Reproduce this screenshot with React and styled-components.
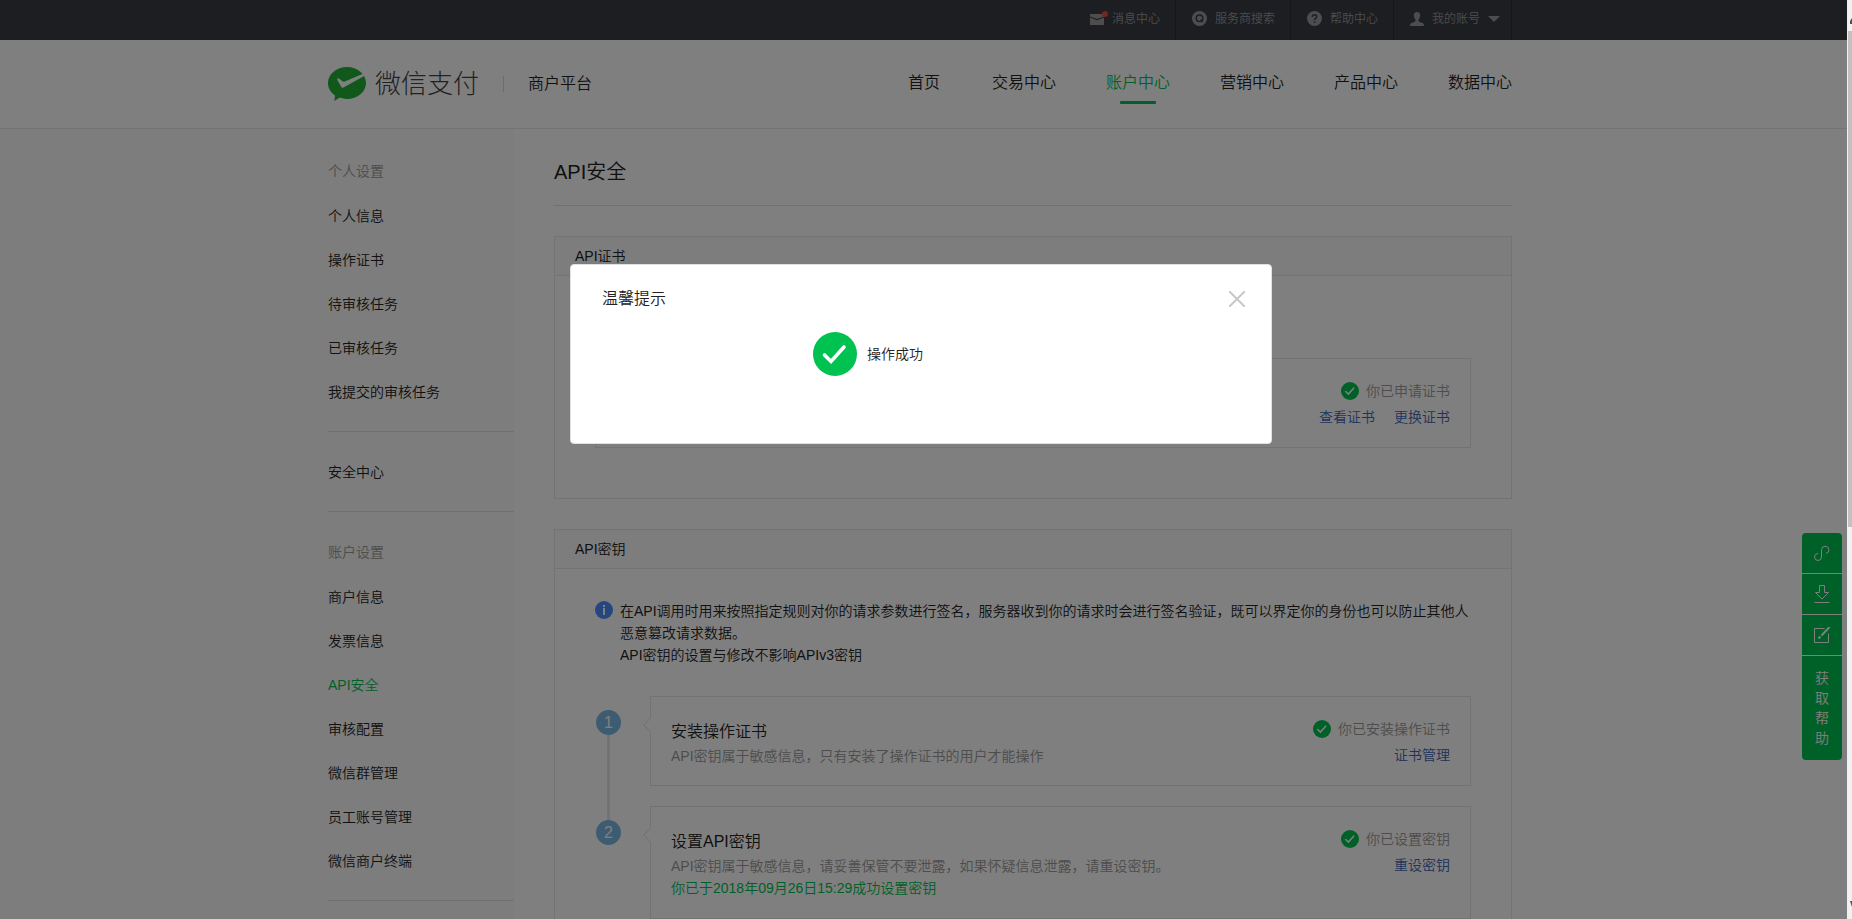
import React, { useState } from "react";
import styled, { createGlobalStyle, css } from "styled-components";

const GlobalStyle = createGlobalStyle`
  * {
    box-sizing: border-box;
  }
  body {
    margin: 0;
    color: #222;
    background: #fff;
    font-family: "Liberation Sans", "Noto Sans CJK SC", sans-serif;
    font-size: 14px;
    font-weight: 350;
    line-height: 22px;
    overflow: hidden;
  }
  ul, ol, h1, h2, h3, p {
    margin: 0;
    padding: 0;
    list-style: none;
    font-weight: inherit;
  }
  a {
    color: inherit;
    text-decoration: none;
  }
  button {
    padding: 0;
    border: 0;
    background: none;
    color: inherit;
    font: inherit;
    cursor: pointer;
  }
`;

const green = "#00c250";
const line = "#e7e7eb";

const navItems = ["首页", "交易中心", "账户中心", "营销中心", "产品中心", "数据中心"];

const menuGroups = [
  {
    title: "个人设置",
    items: ["个人信息", "操作证书", "待审核任务", "已审核任务", "我提交的审核任务"],
  },
  { items: ["安全中心"] },
  {
    title: "账户设置",
    items: [
      "商户信息",
      "发票信息",
      "API安全",
      "审核配置",
      "微信群管理",
      "员工账号管理",
      "微信商户终端",
    ],
  },
];

const steps = [
  {
    title: "安装操作证书",
    desc: "API密钥属于敏感信息，只有安装了操作证书的用户才能操作",
    status: "你已安装操作证书",
    action: "证书管理",
  },
  {
    title: "设置API密钥",
    desc: "API密钥属于敏感信息，请妥善保管不要泄露，如果怀疑信息泄露，请重设密钥。",
    note: "你已于2018年09月26日15:29成功设置密钥",
    status: "你已设置密钥",
    action: "重设密钥",
  },
];

/* icons */

function MailIcon() {
  return (
    <svg width="18" height="16" viewBox="0 0 18 16">
      <path d="M0 3h14v2.4L7 8 0 5.400z" fill="#9a9a9a" />
      <path d="M0 6.600 7 9.200l7-2.600V14H0z" fill="#9a9a9a" />
      <circle cx="15" cy="3" r="3" fill="#f0483f" />
    </svg>
  );
}

function SearchIcon() {
  return (
    <svg width="15" height="15" viewBox="0 0 15 15" fill="none">
      <circle cx="7.500" cy="7.500" r="7.500" fill="#9a9a9a" />
      <circle cx="7.500" cy="7.300" r="3.300" stroke="#3a3c44" strokeWidth="1.500" />
      <path d="m8.500 8.500 2.500 2.500" stroke="#3a3c44" strokeWidth="1.500" />
    </svg>
  );
}

function HelpIcon() {
  return (
    <svg width="15" height="15" viewBox="0 0 15 15" fill="none">
      <circle cx="7.500" cy="7.500" r="7.500" fill="#9a9a9a" />
      <path
        d="M5.300 5.900c0-1.400 1-2.200 2.200-2.200s2.200.8 2.200 2c0 1.600-2.100 1.600-2.100 3.300"
        stroke="#3a3c44"
        strokeWidth="1.500"
      />
      <path d="M6.800 10.200h1.600v1.500H6.800z" fill="#3a3c44" />
    </svg>
  );
}

function UserIcon() {
  return (
    <svg width="14" height="14" viewBox="0 0 14 14" fill="#9a9a9a">
      <path d="M7 0c2 0 3.200 1.400 3.200 3.400 0 1.700-.7 3.200-1.700 4v1.500c.4.800 2 1.200 3.600 1.800 1.300.5 1.900 1.300 1.900 3.300H0c0-2 .6-2.800 1.900-3.300 1.600-.6 3.200-1 3.600-1.800V7.400c-1-.8-1.700-2.300-1.700-4C3.800 1.400 5 0 7 0z" />
    </svg>
  );
}

function CaretIcon() {
  return (
    <svg width="12" height="6" viewBox="0 0 12 6" fill="#9a9a9a">
      <path d="M0 0h12L6 6z" />
    </svg>
  );
}

function PayLogo() {
  return (
    <svg width="38" height="34" viewBox="0 0 38 34">
      <path
        d="M19 0C8.500 0 0 7.200 0 16c0 5.200 2.700 9.500 7 12.400L6.300 34l5.500-3.400c2.200.9 4.600 1.400 7.200 1.400 10.500 0 19-7.200 19-16S29.500 0 19 0z"
        fill="#22b037"
      />
      <path
        d="M9.400 11.800c.5-.7 1.300-.5 1.900 0l3.600 2.700c.6.400 1.200.5 2 .1L35.500 6.500l1.500 2.100-21.500 11.800c-1 .6-1.800.4-2.300-.6L9.500 13.200c-.3-.5-.4-1-.1-1.400z"
        fill="#fff"
      />
    </svg>
  );
}

function CheckIcon({ size }) {
  return (
    <svg width={size} height={size} viewBox="0 0 44 44" fill="none">
      <circle cx="22" cy="22" r="22" fill={green} />
      <path
        d="m11.500 23 6.500 6.500L31 15"
        stroke="#fff"
        strokeWidth="3.600"
        strokeLinecap="round"
      />
    </svg>
  );
}

function InfoIcon() {
  return (
    <svg width="18" height="18" viewBox="0 0 18 18">
      <circle cx="9" cy="9" r="9" fill="#4a8cfe" />
      <path d="M8 4h2v2H8zM8 7h2v7H8z" fill="#fff" />
    </svg>
  );
}

function CloseIcon() {
  return (
    <svg width="16" height="16" viewBox="0 0 16 16" stroke="#c8c8c8" strokeWidth="2">
      <path d="m0 0 16 16M16 0 0 16" />
    </svg>
  );
}

function LinkIcon() {
  return (
    <svg width="16" height="16" viewBox="0 0 16 16" fill="none" stroke="#fff">
      <path d="M4 8.500A3.500 3.500 0 1 0 7.500 12V4.500A3.700 3.700 0 1 1 12 8.500" />
    </svg>
  );
}

function DownloadIcon() {
  return (
    <svg width="16" height="18" viewBox="0 0 16 18" fill="none" stroke="#fff">
      <path d="M5.500 7.500v-7h5v7h4L8 14 1.500 7.500zM.5 17.500h15" />
    </svg>
  );
}

function EditIcon() {
  return (
    <svg width="16" height="16" viewBox="0 0 16 16" fill="none" stroke="#fff">
      <path d="M10.500 1.500H.5v14h14v-9" />
      <path d="m15.500 0-8 8.500" strokeWidth="2" />
      <path d="m6.500 9.500-2 2" strokeWidth="2" />
    </svg>
  );
}

function ScrollArrow({ down }) {
  return (
    <svg width="4" height="31" viewBox="0 0 4 31" fill="#505050">
      <path d={down ? "M2 13h2v6z" : "M2 24v-3l2-3v6z"} />
    </svg>
  );
}

/* shell */

const Window = styled.div`
  display: flex;
  height: 100vh;
`;

const Page = styled.div`
  flex: 1;
  min-width: 0;
  overflow: hidden;
`;

const ScrollTrack = styled.div`
  display: flex;
  flex-direction: column;
  width: 5px;
  padding-left: 1px;
  background: #f1f1f1;
`;

const ScrollThumb = styled.div`
  height: 54%;
  margin-bottom: auto;
  background: #c1c1c1;
`;

const Container = styled.div`
  width: 1184px;
  max-width: 100%;
  margin: 0 auto;
`;

const TopBar = styled.div`
  height: 40px;
  padding-right: 7px;
  background: #3a3c44;
`;

const TopLinks = styled.ul`
  display: flex;
  justify-content: flex-end;
`;

const TopLink = styled.a`
  display: flex;
  align-items: center;
  gap: 8px;
  height: 40px;
  padding: 0 15px 3px 16px;
  border-right: 1px solid #2a2c31;
  color: #9a9a9a;
  font-size: 12px;

  ${({ $tight }) => $tight && css`
    gap: 4px;
  `}
  ${({ $menu }) => $menu && css`
    padding-right: 11px;
  `}
`;

const Header = styled.header`
  padding-right: 7px;
  border-bottom: 1px solid ${line};
`;

const HeaderInner = styled(Container)`
  display: flex;
  align-items: center;
  height: 88px;
`;

const Brand = styled.a`
  display: flex;
  align-items: center;
  gap: 9px;
  color: #444;
  font-size: 26px;
  font-weight: 300;
`;

const Platform = styled.span`
  margin-left: 24px;
  padding-left: 24px;
  border-left: 1px solid #d9d9d9;
  font-size: 16px;
  line-height: 16px;
`;

const Nav = styled.nav`
  display: flex;
  gap: 50px;
  margin-left: auto;
`;

const NavLink = styled.a`
  display: flex;
  flex-direction: column;
  align-items: center;
  padding-top: 7px;
  font-size: 16px;
  line-height: 24px;
  color: ${({ $active }) => ($active ? green : "#222")};

  &::after {
    content: "";
    width: 36px;
    height: 3px;
    margin-top: 6px;
    border-radius: 1px;
    background: ${({ $active }) => ($active ? green : "transparent")};
  }
`;

/* side menu and content */

const Body = styled.div`
  display: flex;
  padding-right: 7px;

  &::before,
  &::after {
    content: "";
    flex: 1;
  }
  &::before {
    background: #fafafa;
  }
`;

const Columns = styled.div`
  display: flex;
  width: 1184px;
`;

const Aside = styled.aside`
  width: 186px;
  padding-top: 2px;
  background: #fafafa;
`;

const MenuGroup = styled.div`
  padding: 18px 0 17px;
  border-bottom: 1px solid #e0e0e0;
  line-height: 44px;
`;

const MenuTitle = styled.h2`
  height: 44px;
  margin-bottom: 1px;
  color: #9a9a9a;
  font-size: 14px;
`;

const MenuLink = styled.a`
  display: block;
  color: ${({ $active }) => ($active ? green : "#222")};
`;

const Main = styled.main`
  flex: 1;
  padding-left: 40px;
`;

const PageTitle = styled.h1`
  padding-top: 10px;
  border-bottom: 1px solid #e0e0e0;
  font-size: 20px;
  line-height: 66px;
`;

const Panel = styled.section`
  margin-top: 30px;
  border: 1px solid ${line};
`;

const PanelTitle = styled.h2`
  padding-left: 20px;
  border-bottom: 1px solid ${line};
  background: #fafafa;
  font-size: 14px;
  line-height: 38px;
`;

const PanelBody = styled.div`
  padding: ${({ $top }) => $top}px 40px 50px;
`;

const Notice = styled.div`
  display: flex;
  gap: 7px;
  margin-bottom: 30px;

  svg {
    flex: none;
    margin-top: 1px;
  }
`;

const Card = styled.div`
  flex: 1;
  display: flex;
  justify-content: space-between;
  min-height: 90px;
  padding: 19px 20px 17px;
  border: 1px solid ${line};
  position: relative;
`;

const Pointer = styled.span`
  position: absolute;
  top: 23px;
  left: -6px;
  width: 10px;
  height: 10px;
  border: 1px solid ${line};
  border-width: 0 0 1px 1px;
  background: #fff;
  transform: rotate(45deg);
`;

const CardText = styled.div`
  padding-top: 3px;
`;

const CardTitle = styled.h3`
  font-size: 16px;
  line-height: 26px;
`;

const Muted = styled.p`
  color: #9a9a9a;
`;

const Done = styled.p`
  margin-bottom: 2px;
  color: ${green};
`;

const Side = styled.div`
  margin-left: auto;
  line-height: 26px;
`;

const Status = styled.div`
  display: flex;
  align-items: center;
  justify-content: flex-end;
  gap: 7px;
  color: #9a9a9a;
`;

const Actions = styled.div`
  display: flex;
  justify-content: flex-end;
  gap: 19px;
  color: #4265b5;
`;

const Step = styled.li`
  display: flex;
`;

const Rail = styled.div`
  display: flex;
  flex-direction: column;
  align-items: center;
  width: 27px;
  margin-right: 28px;
`;

const RailLine = styled.span`
  flex: ${({ $lead }) => ($lead ? "none" : 1)};
  width: 3px;
  height: 14px;
  background: ${({ $hidden }) => ($hidden ? "transparent" : line)};
`;

const StepNumber = styled.span`
  width: 25px;
  height: 25px;
  border-radius: 50%;
  background: #7ab8e4;
  color: #fff;
  font-size: 16px;
  line-height: 25px;
  text-align: center;
`;

const StepContent = styled.div`
  flex: 1;
  padding-bottom: 20px;
`;

/* floating help bar */

const HelpBar = styled.div`
  position: fixed;
  top: 533px;
  right: 10px;
  width: 40px;
  border-radius: 4px;
  overflow: hidden;
  display: flex;
  flex-direction: column;
  gap: 1px;
`;

const HelpButton = styled.button`
  display: flex;
  align-items: center;
  justify-content: center;
  height: 40px;
  background: ${green};
  color: #fff;
`;

const HelpText = styled(HelpButton)`
  height: 104px;
  padding: 0 12px;
  line-height: 20px;
`;

/* dialog */

const Mask = styled.div`
  position: fixed;
  inset: 0 5px 0 0;
  padding: 264px 5px 0 0;
  background: rgba(0, 0, 0, 0.5);
`;

const Dialog = styled.div`
  width: 702px;
  max-width: 100%;
  min-height: 180px;
  margin: 0 auto;
  border: 1px solid #e0e0e0;
  border-radius: 4px;
  background: #fff;
`;

const DialogHead = styled.div`
  display: flex;
  align-items: center;
  justify-content: space-between;
  height: 67px;
  padding: 0 26px 0 31px;
`;

const DialogTitle = styled.h2`
  font-size: 16px;
`;

const CloseButton = styled.button`
  display: flex;
`;

const Result = styled.div`
  display: flex;
  align-items: center;
  gap: 10px;
  padding-left: 242px;
`;

function TopNav() {
  return (
    <TopBar>
      <Container>
        <TopLinks>
          <li>
            <TopLink href="#message" $tight>
              <MailIcon />
              消息中心
            </TopLink>
          </li>
          <li>
            <TopLink href="#search">
              <SearchIcon />
              服务商搜索
            </TopLink>
          </li>
          <li>
            <TopLink href="#help">
              <HelpIcon />
              帮助中心
            </TopLink>
          </li>
          <li>
            <TopLink href="#account" $menu>
              <UserIcon />
              我的账号
              <CaretIcon />
            </TopLink>
          </li>
        </TopLinks>
      </Container>
    </TopBar>
  );
}

function SideMenu() {
  return (
    <Aside>
      {menuGroups.map((group) => (
        <MenuGroup key={group.items[0]}>
          {group.title && <MenuTitle>{group.title}</MenuTitle>}
          <ul>
            {group.items.map((item) => (
              <li key={item}>
                <MenuLink href="#menu" $active={item === "API安全"}>
                  {item}
                </MenuLink>
              </li>
            ))}
          </ul>
        </MenuGroup>
      ))}
    </Aside>
  );
}

function CardSide({ status, actions }) {
  return (
    <Side>
      <Status>
        <CheckIcon size={18} />
        {status}
      </Status>
      <Actions>
        {actions.map((action) => (
          <a href="#action" key={action}>{action}</a>
        ))}
      </Actions>
    </Side>
  );
}

export default function App() {
  const [open, setOpen] = useState(true);

  return (
    <Window>
      <GlobalStyle />
      <Page>
        <TopNav />
        <Header>
          <HeaderInner>
            <Brand href="#home">
              <PayLogo />
              微信支付
            </Brand>
            <Platform>商户平台</Platform>
            <Nav>
              {navItems.map((item) => (
                <NavLink href="#nav" key={item} $active={item === "账户中心"}>
                  {item}
                </NavLink>
              ))}
            </Nav>
          </HeaderInner>
        </Header>
        <Body>
          <Columns>
            <SideMenu />
            <Main>
              <PageTitle>API安全</PageTitle>
              <Panel>
                <PanelTitle>API证书</PanelTitle>
                <PanelBody $top={82}>
                  <Card>
                    <CardSide status="你已申请证书" actions={["查看证书", "更换证书"]} />
                  </Card>
                </PanelBody>
              </Panel>
              <Panel>
                <PanelTitle>API密钥</PanelTitle>
                <PanelBody $top={31}>
                  <Notice>
                    <InfoIcon />
                    <div>
                      <p>
                        在API调用时用来按照指定规则对你的请求参数进行签名，服务器收到你的请求时会进行签名验证，既可以界定你的身份也可以防止其他人恶意篡改请求数据。
                      </p>
                      <p>API密钥的设置与修改不影响APIv3密钥</p>
                    </div>
                  </Notice>
                  <ol>
                    {steps.map((step, i) => (
                      <Step key={step.title}>
                        <Rail>
                          <RailLine $lead $hidden={i === 0} />
                          <StepNumber>{i + 1}</StepNumber>
                          <RailLine $hidden={i === steps.length - 1} />
                        </Rail>
                        <StepContent>
                          <Card>
                            <Pointer />
                            <CardText>
                              <CardTitle>{step.title}</CardTitle>
                              <Muted>{step.desc}</Muted>
                              {step.note && <Done>{step.note}</Done>}
                            </CardText>
                            <CardSide status={step.status} actions={[step.action]} />
                          </Card>
                        </StepContent>
                      </Step>
                    ))}
                  </ol>
                </PanelBody>
              </Panel>
            </Main>
          </Columns>
        </Body>
      </Page>
      <ScrollTrack>
        <ScrollArrow />
        <ScrollThumb />
        <ScrollArrow down />
      </ScrollTrack>
      <HelpBar>
        <HelpButton aria-label="链接"><LinkIcon /></HelpButton>
        <HelpButton aria-label="下载"><DownloadIcon /></HelpButton>
        <HelpButton aria-label="反馈"><EditIcon /></HelpButton>
        <HelpText>获取帮助</HelpText>
      </HelpBar>
      {open && (
        <Mask>
          <Dialog role="dialog" aria-labelledby="dialog-title">
            <DialogHead>
              <DialogTitle id="dialog-title">温馨提示</DialogTitle>
              <CloseButton aria-label="关闭" onClick={() => setOpen(false)}>
                <CloseIcon />
              </CloseButton>
            </DialogHead>
            <Result>
              <CheckIcon size={44} />
              操作成功
            </Result>
          </Dialog>
        </Mask>
      )}
    </Window>
  );
}
